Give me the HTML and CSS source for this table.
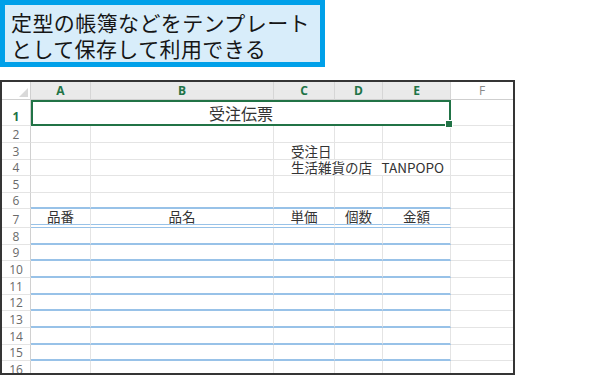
FILE: index.html
```html
<!DOCTYPE html>
<html lang="ja">
<head>
<meta charset="utf-8">
<title>受注伝票</title>
<link rel="stylesheet" href="styles.css">
</head>
<body>
<div class="caption">定型の帳簿などをテンプレート<br>として保存して利用できる</div>
<div class="sheet">
  <div class="row hdr">
    <div class="corner"></div>
    <div class="ch">A</div><div class="ch">B</div><div class="ch">C</div><div class="ch">D</div><div class="ch">E</div><div class="ch f">F</div>
  </div>
  <div class="row r1">
    <div class="rh sel">1</div>
    <div class="merged">受注伝票</div>
    <div class="c last"></div>
  </div>
  <div class="row"><div class="rh">2</div><div class="c"></div><div class="c"></div><div class="c"></div><div class="c"></div><div class="c"></div><div class="c last"></div></div>
  <div class="row"><div class="rh">3</div><div class="c"></div><div class="c"></div><div class="c left">受注日</div><div class="c"></div><div class="c"></div><div class="c last"></div></div>
  <div class="row"><div class="rh">4</div><div class="c"></div><div class="c"></div><div class="c left span3">生活雑貨の店&ensp;&thinsp;TANPOPO</div><div class="c last"></div></div>
  <div class="row"><div class="rh">5</div><div class="c"></div><div class="c"></div><div class="c"></div><div class="c"></div><div class="c"></div><div class="c last"></div></div>
  <div class="row"><div class="rh">6</div><div class="c b"></div><div class="c b"></div><div class="c b"></div><div class="c b"></div><div class="c b"></div><div class="c last"></div></div>
  <div class="row r7"><div class="rh">7</div><div class="c dbl">品番</div><div class="c dbl">品名</div><div class="c dbl">単価</div><div class="c dbl">個数</div><div class="c dbl">金額</div><div class="c last"></div></div>
  <div class="row"><div class="rh">8</div><div class="c b"></div><div class="c b"></div><div class="c b"></div><div class="c b"></div><div class="c b"></div><div class="c last"></div></div>
  <div class="row"><div class="rh">9</div><div class="c b"></div><div class="c b"></div><div class="c b"></div><div class="c b"></div><div class="c b"></div><div class="c last"></div></div>
  <div class="row"><div class="rh">10</div><div class="c b"></div><div class="c b"></div><div class="c b"></div><div class="c b"></div><div class="c b"></div><div class="c last"></div></div>
  <div class="row"><div class="rh">11</div><div class="c b"></div><div class="c b"></div><div class="c b"></div><div class="c b"></div><div class="c b"></div><div class="c last"></div></div>
  <div class="row"><div class="rh">12</div><div class="c b"></div><div class="c b"></div><div class="c b"></div><div class="c b"></div><div class="c b"></div><div class="c last"></div></div>
  <div class="row"><div class="rh">13</div><div class="c b"></div><div class="c b"></div><div class="c b"></div><div class="c b"></div><div class="c b"></div><div class="c last"></div></div>
  <div class="row"><div class="rh">14</div><div class="c b"></div><div class="c b"></div><div class="c b"></div><div class="c b"></div><div class="c b"></div><div class="c last"></div></div>
  <div class="row"><div class="rh">15</div><div class="c b"></div><div class="c b"></div><div class="c b"></div><div class="c b"></div><div class="c b"></div><div class="c last"></div></div>
  <div class="row"><div class="rh">16</div><div class="c b"></div><div class="c b"></div><div class="c b"></div><div class="c b"></div><div class="c b"></div><div class="c last"></div></div>
</div>
</body>
</html>
```
FILE: styles.css
```css
* { box-sizing: border-box; }

body {
  margin: 0;
  background: #fff;
  font-family: "Noto Sans CJK JP", "Noto Sans", sans-serif;
}

.caption {
  width: 325px;
  height: 67px;
  border: 5px solid #00a0e9;
  background: #d8edfa;
  padding: 4px 0 0 6px;
  font-size: 21px;
  line-height: 26px;
  letter-spacing: 0.4px;
  color: #161616;
}

.sheet {
  margin-top: 13px;
  width: 515px;
  height: 295px;
  border: 2px solid #353535;
  overflow: hidden;
}

.row {
  display: grid;
  grid-template-columns: 29px 60px 183px 61px 48px 68px 1fr;
  height: 16.67px;
}

.hdr { height: 18px; }
.r1 { height: 26px; }
.r7 { height: 18.67px; }

.corner {
  position: relative;
  border-right: 1px solid #d0d0d0;
  border-bottom: 1px solid #d0d0d0;
}

.corner::after {
  content: "";
  position: absolute;
  right: 2px;
  bottom: 2px;
  width: 9px;
  height: 9px;
  background: #d9d9d9;
  clip-path: polygon(100% 0, 100% 100%, 0 100%);
}

.ch {
  display: flex;
  align-items: center;
  justify-content: center;
  background: #eaeaea;
  border-right: 1px solid #d6d6d6;
  border-bottom: 1px solid #cfcfcf;
  font-family: "Open Sans", "DejaVu Sans", sans-serif;
  font-size: 12px;
  font-weight: 700;
  color: #217346;
}

.ch.f {
  background: #fff;
  border-right: none;
  font-weight: 400;
  color: #8a8a8a;
}

.rh {
  display: flex;
  align-items: flex-end;
  justify-content: center;
  border-right: 1px solid #d0d0d0;
  border-bottom: 1px solid #e4e4e4;
  font-family: "Open Sans", "DejaVu Sans", sans-serif;
  font-size: 12px;
  line-height: 15px;
  color: #6a6a6a;
}

.rh.sel {
  color: #217346;
  font-weight: 700;
  padding-bottom: 1px;
}

.c {
  display: flex;
  align-items: flex-end;
  justify-content: center;
  border-right: 1px solid #e4e4e4;
  border-bottom: 1px solid #e4e4e4;
  font-size: 13.5px;
  line-height: 16px;
  color: #333;
  white-space: nowrap;
}

.c.last { border-right: none; }

.c.left {
  justify-content: flex-start;
  padding-left: 17px;
}

.c.span3 { grid-column: 4 / 7; }

.c.b { border-bottom: 2px solid #98c2e8; }

.c.dbl {
  border-bottom: 4px double #98c2e8;
  line-height: 15px;
}

.merged {
  position: relative;
  grid-column: 2 / 7;
  display: flex;
  align-items: flex-end;
  justify-content: center;
  border: 2px solid #217346;
  font-size: 16px;
  line-height: 20px;
  color: #333;
  padding-bottom: 1px;
}

.merged::after {
  content: "";
  position: absolute;
  right: -4px;
  bottom: -4px;
  width: 6px;
  height: 6px;
  background: #217346;
  border: 1px solid #fff;
}
```
